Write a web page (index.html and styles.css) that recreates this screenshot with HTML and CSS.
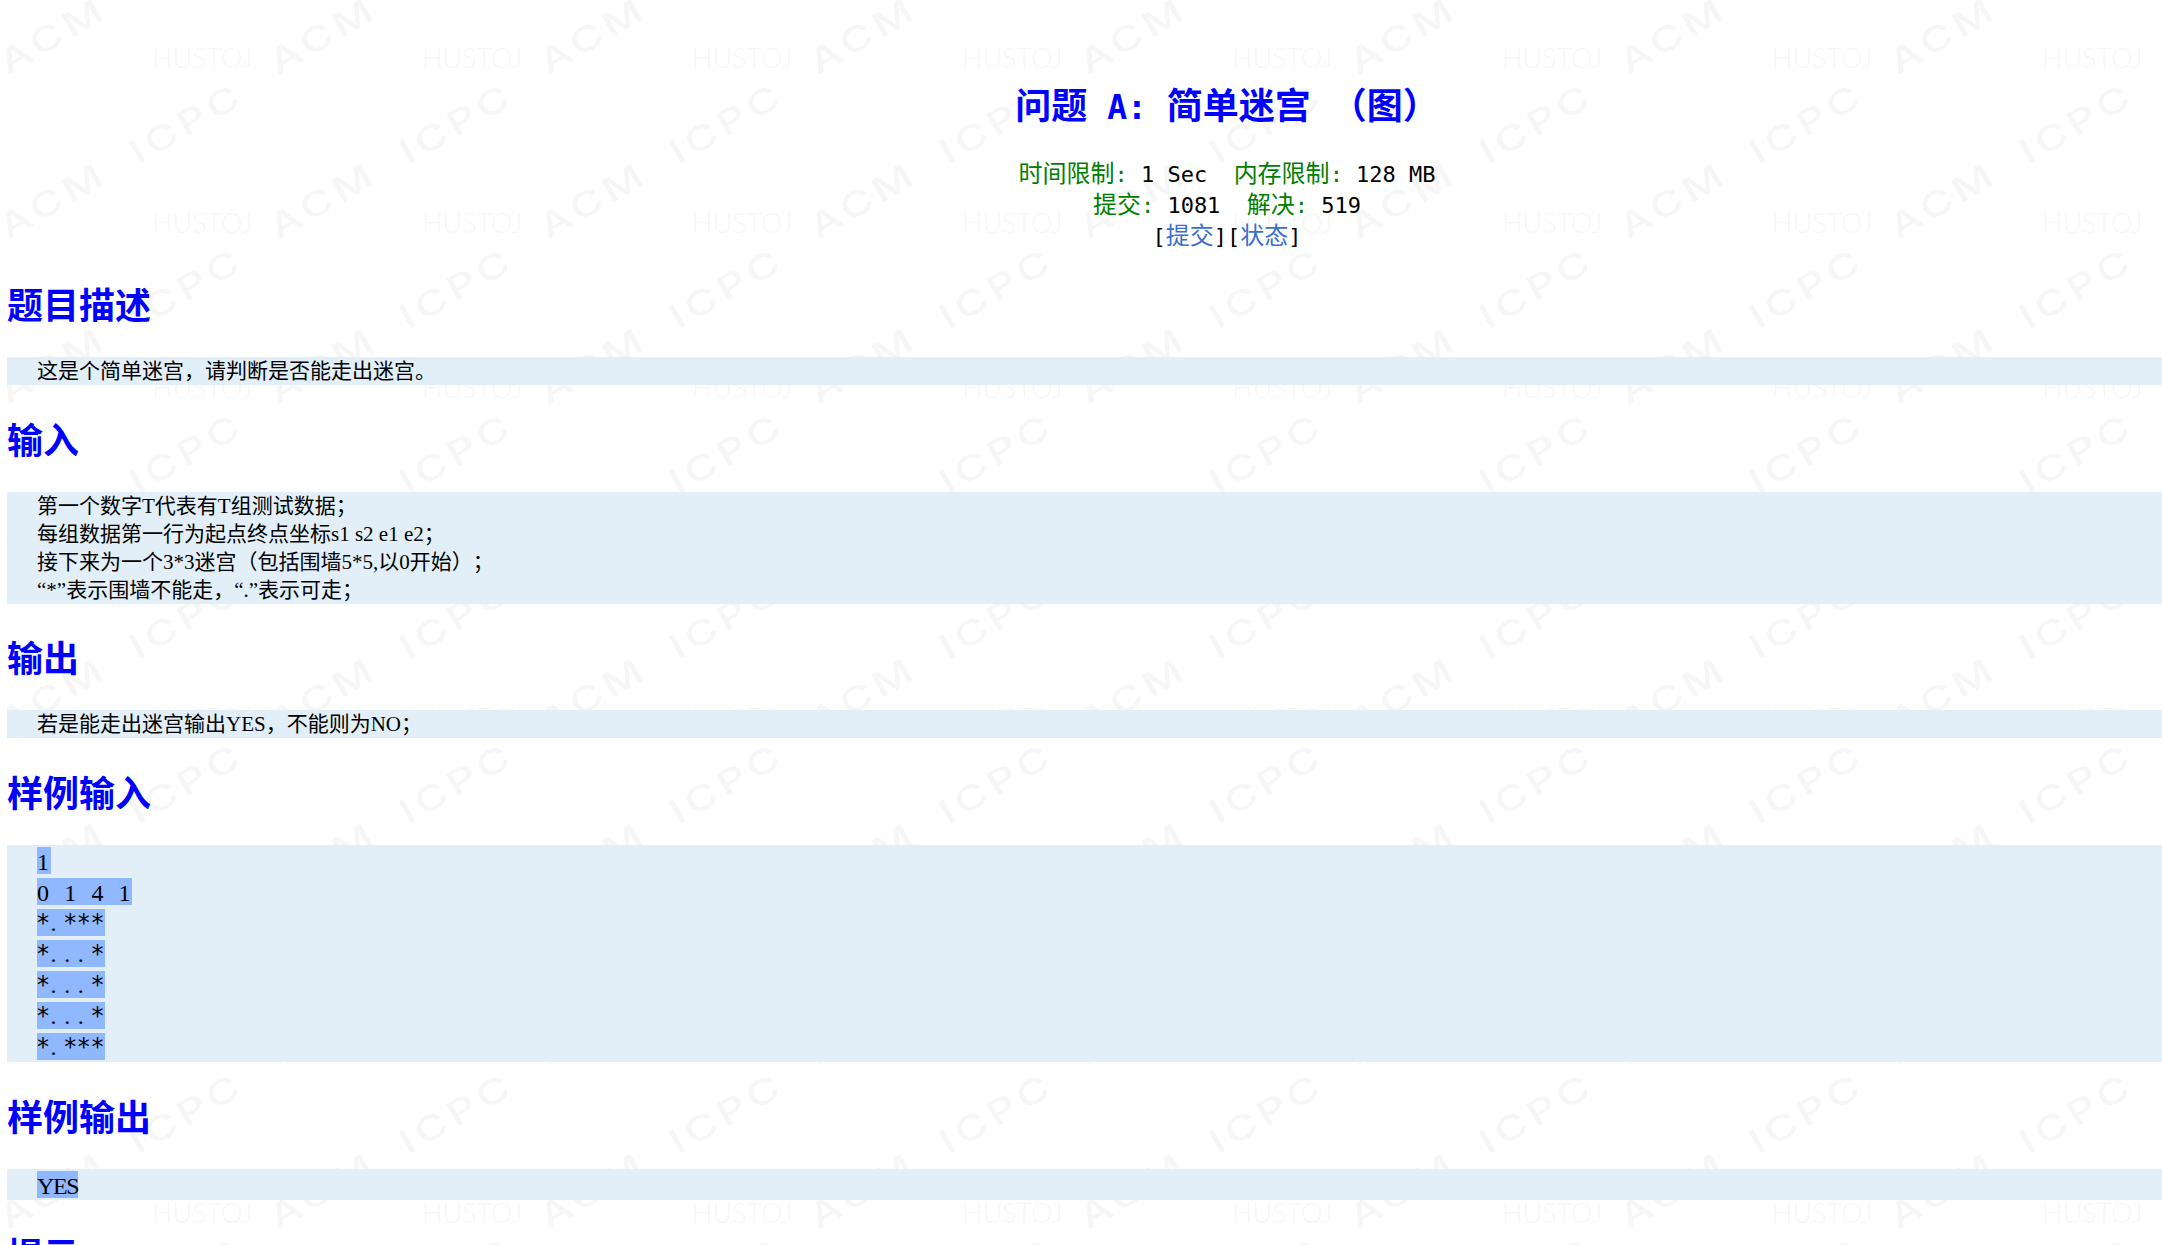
FILE: index.html
```html
<!DOCTYPE html>
<html lang="zh-CN">
<head>
<meta charset="utf-8">
<title>问题 A: 简单迷宫</title>
<link rel="stylesheet" href="styles.css">
</head>
<body>
<svg class="watermark" width="2162" height="1245" aria-hidden="true">
  <defs>
    <pattern id="wm" width="270" height="165" patternUnits="userSpaceOnUse">
      <text class="wm-big" transform="translate(8 75) rotate(-30) scale(1.3 1)">ACM</text>
      <text class="wm-big" transform="translate(8 240) rotate(-30) scale(1.3 1)">ACM</text>
      <text class="wm-small" x="152" y="68">HUSTOJ</text>
      <text class="wm-big" transform="translate(138 165) rotate(-30) scale(1.3 1)">ICPC</text>
      <text class="wm-big" transform="translate(138 0) rotate(-30) scale(1.3 1)">ICPC</text>
    </pattern>
  </defs>
  <rect width="2162" height="1245" fill="url(#wm)"/>
</svg>
<main class="page">
  <header class="head">
    <h1 class="title"><span class="cjk">问题</span> A: <span class="cjk">简单迷宫</span> <span class="cjk">（图）</span></h1>
    <div class="meta">
      <div><span class="lbl"><span class="cjk">时间限制</span>:</span> 1 Sec&nbsp;&nbsp;<span class="lbl"><span class="cjk">内存限制</span>:</span> 128 MB</div>
      <div><span class="lbl"><span class="cjk">提交</span>:</span> 1081&nbsp;&nbsp;<span class="lbl"><span class="cjk">解决</span>:</span> 519</div>
      <div>[<a class="lnk cjk" href="#">提交</a>][<a class="lnk cjk" href="#">状态</a>]</div>
    </div>
  </header>
  <h2 class="sec">题目描述</h2>
  <div class="panel"><p>这是个简单迷宫，请判断是否能走出迷宫。</p></div>
  <h2 class="sec">输入</h2>
  <div class="panel">
    <p>第一个数字T代表有T组测试数据；</p>
    <p>每组数据第一行为起点终点坐标s1 s2 e1 e2；</p>
    <p>接下来为一个3*3迷宫（包括围墙5*5,以0开始）；</p>
    <p>“*”表示围墙不能走，“.”表示可走；</p>
  </div>
  <h2 class="sec">输出</h2>
  <div class="panel"><p>若是能走出迷宫输出YES，不能则为NO；</p></div>
  <h2 class="sec">样例输入</h2>
  <div class="panel sample">
    <div><span class="sel">1</span></div>
    <div><span class="sel">0 1 4 1</span></div>
    <div><span class="sel maze">*<span class="dot">.</span>***</span></div>
    <div><span class="sel maze">*<span class="dot">...</span>*</span></div>
    <div><span class="sel maze">*<span class="dot">...</span>*</span></div>
    <div><span class="sel maze">*<span class="dot">...</span>*</span></div>
    <div><span class="sel maze">*<span class="dot">.</span>***</span></div>
  </div>
  <h2 class="sec">样例输出</h2>
  <div class="panel sample">
    <div><span class="sel yes">YES</span></div>
  </div>
  <h2 class="sec">提示</h2>
</main>
</body>
</html>
```
FILE: styles.css
```css
html { background: #fff; overflow: hidden; }
body { margin: 0; padding: 0; height: 1245px; overflow: hidden; text-spacing-trim: space-all; }
.watermark { position: absolute; left: 0; top: 0; z-index: -1; }
.wm-big { font: 500 34px "Inter", "Liberation Sans", sans-serif; fill: #f6f6f6; letter-spacing: 4px; }
.wm-small { font: 300 27px "Lato", "Liberation Sans", sans-serif; fill: #f6f6f6; }
.page { width: 2440px; margin-left: 7px; font-family: "Liberation Serif", "Noto Sans CJK SC", serif; font-size: 21px; line-height: 28px; color: #000; }
.head { text-align: center; box-sizing: border-box; height: 250px; padding-top: 86px; }
.title { margin: 0 0 29px; font: 700 33px/44px "DejaVu Sans Mono", monospace; color: #00f; }
.title .cjk { font: 700 36px/20px "Noto Sans CJK SC", sans-serif; }
.meta { font: 400 22px/31px "DejaVu Sans Mono", monospace; }
.meta .cjk { font: 400 24px/20px "Noto Sans CJK SC", sans-serif; }
.lbl { color: #008000; }
.lnk { color: #3a6fcf; text-decoration: none; }
.sec { margin: 29.75px 0 24px; font: 700 36px/53px "Liberation Sans", "Noto Sans CJK SC", sans-serif; color: #00f; }
.panel { background: #e2eff8; padding-left: 30px; }
.panel p { margin: 0; }
.sample { font: 400 24px/31px "Liberation Serif", serif; letter-spacing: 1.6px; word-spacing: 6px; }
.sample > div { height: 31px; }
.sel { display: inline-block; height: 27px; margin-top: 2px; vertical-align: top; background: #8fb8ff; white-space: pre; }
.maze { font-family: "DejaVu Sans", sans-serif; line-height: 29px; }
.dot { font-family: "Liberation Serif", serif; letter-spacing: 7.6px; }
.yes { letter-spacing: -1.4px; }
```
